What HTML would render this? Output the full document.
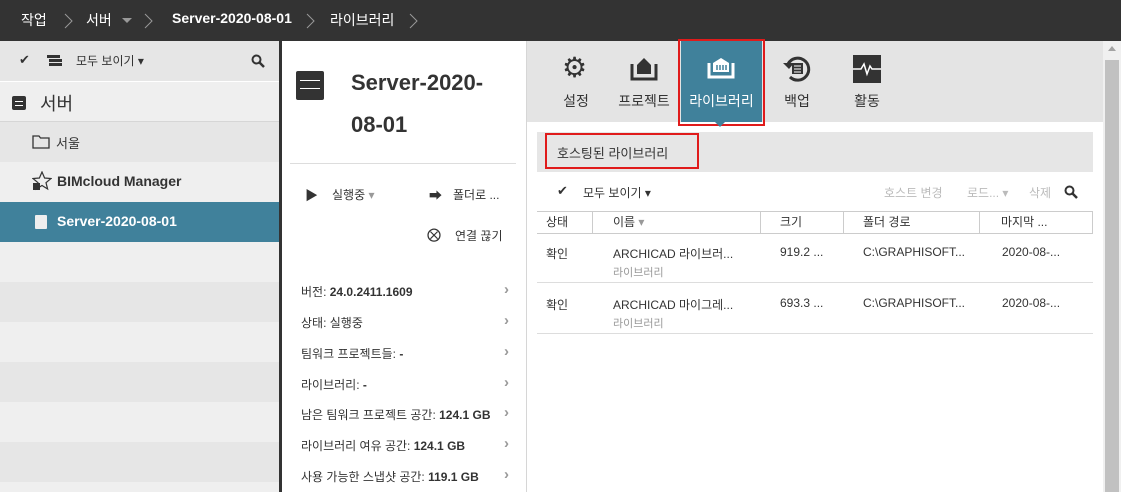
<!DOCTYPE html><html style="overflow:hidden;height:492px"><head><meta charset="utf-8"><style>
*{box-sizing:border-box;margin:0;padding:0}
body{width:1121px;height:492px;overflow:hidden;font-family:"Liberation Sans","Noto Sans CJK KR",sans-serif;font-size:13px;color:#333;background:#fff;position:relative}
.a{position:absolute}
.top{left:0;top:0;width:1121px;height:41px;background:#333;color:#fff;font-size:14px}
.top span{position:absolute;top:10px}
.top svg{position:absolute;top:13px}
.row{position:absolute;left:0;width:279px;height:40px}
.tab{position:absolute;top:41px;height:81px;width:80px;text-align:center;font-size:14px;color:#333}
.tab .l{position:absolute;top:50px;left:0;width:100%}
.info{position:absolute;left:301px;width:208px;font-size:12px}
.info b{font-weight:bold}
.info i{position:absolute;right:0;top:-2px;font-style:normal;color:#999;font-weight:bold;font-size:15px}
.th{position:absolute;top:213px;font-size:12px}
.td{position:absolute;font-size:12px}
</style></head><body>
<div class="a top">
<span style="left:21px">작업</span><svg style="left:64px" width="9" height="16"><path d="M1 1l7 7-7 7" stroke="#999" fill="none"/></svg>
<span style="left:86px">서버</span><div class="a" style="left:122px;top:18px;border:5px solid transparent;border-top-color:#999;border-bottom:0"></div><svg style="left:144px" width="9" height="16"><path d="M1 1l7 7-7 7" stroke="#999" fill="none"/></svg>
<span style="left:172px;font-weight:bold">Server-2020-08-01</span><svg style="left:306px" width="9" height="16"><path d="M1 1l7 7-7 7" stroke="#999" fill="none"/></svg>
<span style="left:330px">라이브러리</span><svg style="left:409px" width="9" height="16"><path d="M1 1l7 7-7 7" stroke="#999" fill="none"/></svg>
</div>
<!-- left -->
<div class="row" style="top:41px;background:#e6e6e6"></div>
<div class="a" style="left:19px;top:52px;font-size:13px">✔</div>
<div class="a" style="left:47px;top:55px;width:13px;height:3px;background:#333;box-shadow:2px 4px 0 #333,2px 8px 0 #333"></div>
<div class="a" style="left:76px;top:52px;font-size:12px">모두 보이기 ▾</div>
<svg class="a" style="left:251px;top:54px" width="14" height="14"><circle cx="5.5" cy="5.5" r="4" stroke="#333" stroke-width="2" fill="none"/><path d="M8.5 8.5L13 13" stroke="#333" stroke-width="2.5"/></svg>
<div class="row" style="top:82px;background:#efefef;border-bottom:1px solid #d6d6d6"></div>
<div class="a" style="left:12px;top:96px;width:14px;height:14px;background:#333;border-radius:2px"></div>
<div class="a" style="left:15px;top:101px;width:8px;height:1px;background:#fff;box-shadow:0 4px 0 #fff"></div>
<div class="a" style="left:40px;top:90px;font-size:18px">서버</div>
<div class="row" style="top:122px;background:#e6e6e6"></div>
<svg class="a" style="left:32px;top:134px" width="18" height="15"><path d="M1 2h6l1.5 2H17v10H1z" fill="none" stroke="#333" stroke-width="1.3"/></svg>
<div class="a" style="left:56px;top:133px">서울</div>
<div class="row" style="top:162px;background:#efefef"></div>
<svg class="a" style="left:32px;top:171px" width="20" height="20"><path d="M10 1l2.6 6 6.4.5-5 4.2 1.6 6.3L10 14.5 4.4 18 6 11.7 1 7.5l6.4-.5z" fill="none" stroke="#333" stroke-width="1.2"/><rect x="1" y="12" width="7" height="7" fill="#333"/></svg>
<div class="a" style="left:57px;top:173px;font-weight:bold;font-size:14px">BIMcloud Manager</div>
<div class="row" style="top:202px;background:#40819b"></div>
<div class="a" style="left:35px;top:215px;width:12px;height:14px;background:#eee;border-radius:1px"></div>
<div class="a" style="left:57px;top:213px;font-weight:bold;font-size:14px;color:#fff">Server-2020-08-01</div>
<div class="row" style="top:242px;background:#efefef"></div>
<div class="row" style="top:282px;background:#e6e6e6"></div>
<div class="row" style="top:322px;background:#efefef"></div>
<div class="row" style="top:362px;background:#e6e6e6"></div>
<div class="row" style="top:402px;background:#efefef"></div>
<div class="row" style="top:442px;background:#e6e6e6"></div>
<div class="row" style="top:482px;height:10px;background:#efefef"></div>
<div class="a" style="left:279px;top:41px;width:3px;height:451px;background:#333"></div>
<!-- middle -->
<div class="a" style="left:296px;top:71px;width:28px;height:29px;background:#333;border-radius:2px"></div>
<div class="a" style="left:300px;top:80px;width:20px;height:1px;background:#fff;box-shadow:0 8px 0 #fff"></div>
<div class="a" style="left:351px;top:62px;font-size:22px;font-weight:bold;line-height:42px">Server-2020-<br>08-01</div>
<div class="a" style="left:290px;top:163px;width:226px;height:1px;background:#ddd"></div>
<div class="a" style="left:305px;top:185px;font-size:13px">▶</div>
<div class="a" style="left:332px;top:186px;font-size:12px">실행중 <span style="color:#999">▾</span></div>
<div class="a" style="left:429px;top:185px;font-size:13px">➡</div>
<div class="a" style="left:453px;top:186px;font-size:12px">폴더로 ...</div>
<div class="a" style="left:427px;top:226px;font-size:14px">⨂</div>
<div class="a" style="left:455px;top:227px;font-size:12px">연결 끊기</div>
<div class="info" style="top:283px">버전: <b>24.0.2411.1609</b><i>›</i></div>
<div class="info" style="top:314px">상태: 실행중<i>›</i></div>
<div class="info" style="top:345px">팀워크 프로젝트들: <b>-</b><i>›</i></div>
<div class="info" style="top:376px">라이브러리: <b>-</b><i>›</i></div>
<div class="info" style="top:406px">남은 팀워크 프로젝트 공간: <b>124.1 GB</b><i>›</i></div>
<div class="info" style="top:437px">라이브러리 여유 공간: <b>124.1 GB</b><i>›</i></div>
<div class="info" style="top:468px">사용 가능한 스냅샷 공간: <b>119.1 GB</b><i>›</i></div>
<div class="a" style="left:526px;top:41px;width:1px;height:451px;background:#d6d6d6"></div>
<!-- right -->
<div class="a" style="left:527px;top:41px;width:576px;height:81px;background:#e4e4e4"></div>
<div class="tab" style="left:536px"><div class="a" style="left:26px;top:13px;font-size:28px;line-height:28px">⚙</div><div class="l">설정</div></div>
<div class="tab" style="left:604px"><svg class="a" style="left:26px;top:13px" width="28" height="28"><path d="M2 10v15h24V10" fill="none" stroke="#333" stroke-width="3"/><path d="M7 20V11l7-7 7 7v9z" fill="#333"/></svg><div class="l">프로젝트</div></div>
<div class="a" style="left:678px;top:39px;width:87px;height:87px;border:2px solid #e01b1b"></div>
<div class="tab" style="left:681px;width:81px;height:81px;background:#40819b;color:#fff"><svg class="a" style="left:26px;top:14px" width="28" height="24"><path d="M2 8v14h24V8" fill="none" stroke="#fff" stroke-width="3"/><path d="M6 17h16V8L14 3 6 8z" fill="#fff"/><path d="M10 10v5M13 10v5M16 10v5M19 10v5" stroke="#40819b" stroke-width="1.5"/></svg><div class="l">라이브러리</div></div>
<div class="a" style="left:715px;top:122px;width:0;height:0;border:5px solid transparent;border-top-color:#40819b"></div>
<div class="tab" style="left:757px"><svg class="a" style="left:25px;top:13px" width="30" height="30"><path d="M6 10A11 11 0 1 1 8 23" fill="none" stroke="#333" stroke-width="3"/><path d="M1 9l6 6 5-6z" fill="#333"/><rect x="10" y="9" width="11" height="11" fill="#333"/><path d="M12 12h7M12 15h7M12 18h7" stroke="#fff"/></svg><div class="l">백업</div></div>
<div class="tab" style="left:827px"><svg class="a" style="left:26px;top:14px" width="28" height="28"><rect width="28" height="28" fill="#333"/><path d="M0 14h8l3-5 3 10 3-8 2 3h9" stroke="#fff" stroke-width="1.5" fill="none"/></svg><div class="l">활동</div></div>
<div class="a" style="left:537px;top:132px;width:556px;height:40px;background:#e6e6e6"></div>
<div class="a" style="left:545px;top:133px;width:154px;height:36px;border:2px solid #e01b1b"></div>
<div class="a" style="left:557px;top:143px;font-size:13px">호스팅된 라이브러리</div>
<div class="a" style="left:557px;top:183px;font-size:13px">✔</div>
<div class="a" style="left:583px;top:184px;font-size:12px">모두 보이기 ▾</div>
<div class="a" style="left:884px;top:184px;font-size:12px;color:#bbb">호스트 변경</div>
<div class="a" style="left:967px;top:184px;font-size:12px;color:#bbb">로드... ▾</div>
<div class="a" style="left:1029px;top:184px;font-size:12px;color:#bbb">삭제</div>
<svg class="a" style="left:1064px;top:185px" width="14" height="14"><circle cx="5.5" cy="5.5" r="4" stroke="#333" stroke-width="2" fill="none"/><path d="M8.5 8.5L13 13" stroke="#333" stroke-width="2.5"/></svg>
<div class="a" style="left:537px;top:211px;width:556px;height:23px;border-top:1px solid #ccc;border-bottom:1px solid #ccc;border-right:1px solid #ccc"></div>
<div class="a" style="left:592px;top:212px;width:1px;height:21px;background:#ccc"></div>
<div class="a" style="left:760px;top:212px;width:1px;height:21px;background:#ccc"></div>
<div class="a" style="left:843px;top:212px;width:1px;height:21px;background:#ccc"></div>
<div class="a" style="left:979px;top:212px;width:1px;height:21px;background:#ccc"></div>
<div class="th" style="left:546px">상태</div><div class="th" style="left:613px">이름 <span style="color:#999">▾</span></div><div class="th" style="left:780px">크기</div><div class="th" style="left:863px">폴더 경로</div><div class="th" style="left:1001px">마지막 ...</div>
<div class="td" style="left:546px;top:245px">확인</div><div class="td" style="left:613px;top:245px">ARCHICAD 라이브러...</div><div class="td" style="left:613px;top:264px;color:#999;font-size:11px">라이브러리</div><div class="td" style="left:780px;top:245px">919.2 ...</div><div class="td" style="left:863px;top:245px">C:\GRAPHISOFT...</div><div class="td" style="left:1002px;top:245px">2020-08-...</div>
<div class="a" style="left:537px;top:282px;width:556px;height:1px;background:#ddd"></div>
<div class="td" style="left:546px;top:296px">확인</div><div class="td" style="left:613px;top:296px">ARCHICAD 마이그레...</div><div class="td" style="left:613px;top:315px;color:#999;font-size:11px">라이브러리</div><div class="td" style="left:780px;top:296px">693.3 ...</div><div class="td" style="left:863px;top:296px">C:\GRAPHISOFT...</div><div class="td" style="left:1002px;top:296px">2020-08-...</div>
<div class="a" style="left:537px;top:333px;width:556px;height:1px;background:#ddd"></div>
<!-- scrollbar -->
<div class="a" style="left:1103px;top:41px;width:18px;height:451px;background:#f0f0f0"></div>
<div class="a" style="left:1105px;top:60px;width:14px;height:432px;background:#c1c1c1"></div>
<div class="a" style="left:1108px;top:46px;width:0;height:0;border:4px solid transparent;border-bottom:5px solid #a3a3a3;border-top:0"></div>
</body></html>
